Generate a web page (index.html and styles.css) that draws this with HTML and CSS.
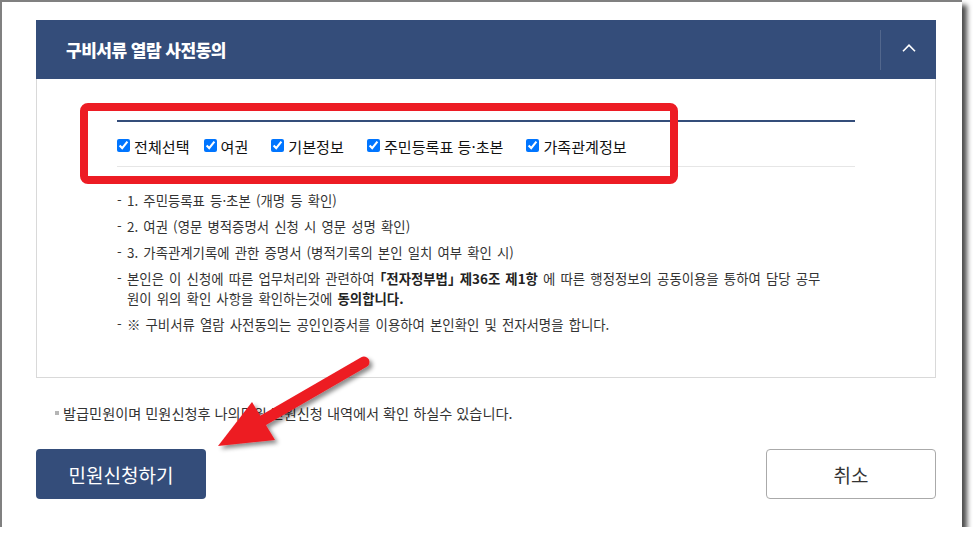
FILE: index.html
```html
<!DOCTYPE html>
<html lang="ko">
  <head>
    <meta charset="UTF-8" />
    <title>구비서류 열람 사전동의</title>
    <link rel="stylesheet" href="styles.css">
  </head>
  <body>
    <div class="shot">
      <section class="panel">
        <div class="panel-head">
          <h2 class="panel-title">구비서류 열람 사전동의</h2>
          <button class="fold" aria-label="접기">
            <svg width="14" height="8" viewBox="0 0 14 8"><path d="M1 7.2 L7 1.2 L13 7.2" fill="none" stroke="#fff" stroke-width="1.6"/></svg>
          </button>
        </div>
        <div class="panel-body">
          <div class="agree-row">
            <label class="chk chk-all"><input type="checkbox" checked>전체선택</label>
            <label class="chk"><input type="checkbox" checked>여권</label>
            <label class="chk"><input type="checkbox" checked>기본정보</label>
            <label class="chk"><input type="checkbox" checked>주민등록표 등·초본</label>
            <label class="chk"><input type="checkbox" checked>가족관계정보</label>
          </div>
          <ul class="notice">
            <li>1. 주민등록표 등·초본 (개명 등 확인)</li>
            <li>2. 여권 (영문 병적증명서 신청 시 영문 성명 확인)</li>
            <li>3. 가족관계기록에 관한 증명서 (병적기록의 본인 일치 여부 확인 시)</li>
            <li class="wrap">본인은 이 신청에 따른 업무처리와 관련하여 <b>「전자정부법」 제36조 제1항</b> 에 따른 행정정보의 공동이용을 통하여 담당 공무원이 위의 확인 사항을 확인하는것에 <b>동의합니다.</b></li>
            <li><span class="ref">※</span> 구비서류 열람 사전동의는 공인인증서를 이용하여 본인확인 및 전자서명을 합니다.</li>
          </ul>
        </div>
      </section>

      <p class="info">발급민원이며 민원신청후 나의민원 민원신청 내역에서 확인 하실수 있습니다.</p>

      <div class="actions">
        <button class="btn btn-primary">민원신청하기</button>
        <button class="btn btn-line">취소</button>
      </div>

      <!-- annotation layer: red box + arrow -->
      <svg class="marks" width="973" height="539" viewBox="0 0 973 539">
        <defs>
          <filter id="shade" x="-20%" y="-20%" width="140%" height="140%">
            <feDropShadow dx="3" dy="3" stdDeviation="2" flood-color="#000" flood-opacity="0.45"/>
          </filter>
        </defs>
        <rect x="84" y="107" width="590" height="73" rx="4" fill="none" stroke="#ed1c24" stroke-width="8"/>
        <g filter="url(#shade)" fill="#ed1c24">
          <line x1="262" y1="421" x2="364" y2="362" stroke="#ed1c24" stroke-width="11" stroke-linecap="round"/>
          <polygon points="218,446 252,402 275,440"/>
        </g>
      </svg>
    </div>
  </body>
</html>
```

FILE: styles.css
```css
body {
  margin: 0;
  background: #fff;
  font-family: "Noto Sans CJK KR", "Noto Sans", sans-serif;
  color: #333;
}
.shot {
  position: relative;
  width: 926px;
  height: 507px;
  padding: 18px 0 0 34px;
  background: #fff;
  border-top: 2px solid #808080;
  border-left: 2px solid #808080;
  box-shadow: 5px 5px 5px rgba(0, 0, 0, 0.7);
}
.panel {
  width: 900px;
}
.panel-head {
  display: flex;
  align-items: center;
  height: 59px;
  background-color: #344d7a;
}
.panel-title {
  flex: 1;
  margin: 0;
  padding-left: 30px;
  color: #fff;
  font-size: 17px;
  font-weight: 900;
  letter-spacing: -0.5px;
}
.fold {
  display: flex;
  align-items: center;
  justify-content: center;
  width: 56px;
  height: 40px;
  padding: 0 0 4px 0;
  background: none;
  border: none;
  border-left: 1px solid rgba(255, 255, 255, 0.15);
}
.panel-body {
  height: 257px;
  padding: 41px 80px 0;
  border: 1px solid #d9d9d9;
  border-top: none;
}
.agree-row {
  display: flex;
  align-items: center;
  height: 41px;
  padding-top: 3px;
  border-top: 2px solid #344d7a;
  border-bottom: 1px solid #e6e6e6;
}
.chk {
  display: flex;
  align-items: center;
  gap: 4px;
  margin-right: 23px;
  font-size: 15.1px;
  color: #111;
}
.chk-all {
  margin-right: 14px;
}
.chk input {
  margin: 0;
  width: 13px;
  height: 13px;
}
.notice {
  list-style: none;
  margin: 23px 0 0;
  padding: 0;
  font-size: 13.4px;
  line-height: 20px;
  word-spacing: 1.4px;
  color: #333;
}
.notice li {
  margin-bottom: 6px;
  padding-left: 10px;
  text-indent: -10px;
}
.notice li.wrap {
  padding-right: 26px;
}
.notice li::before {
  content: "-";
  display: inline-block;
  width: 10px;
  text-indent: 0;
}
.notice b {
  color: #222;
  font-feature-settings: "halt";
}
.ref {
  font-feature-settings: "halt";
}
.info {
  display: flex;
  align-items: center;
  gap: 4px;
  margin: 25px 0 0 19px;
  font-size: 14.2px;
  line-height: 20px;
  color: #333;
}
.info::before {
  content: "";
  width: 4px;
  height: 4px;
  background: #b5b5b5;
}
.actions {
  display: flex;
  justify-content: space-between;
  width: 900px;
  margin-top: 26px;
}
.btn {
  width: 170px;
  height: 50px;
  font-family: inherit;
  font-size: 19px;
  border-radius: 4px;
}
.btn-primary {
  background-color: #344d7a;
  color: #fff;
  border: none;
}
.btn-line {
  background: #fff;
  color: #333;
  border: 1px solid #aaa;
}
.marks {
  position: absolute;
  top: -2px;
  left: -2px;
  pointer-events: none;
}
```
